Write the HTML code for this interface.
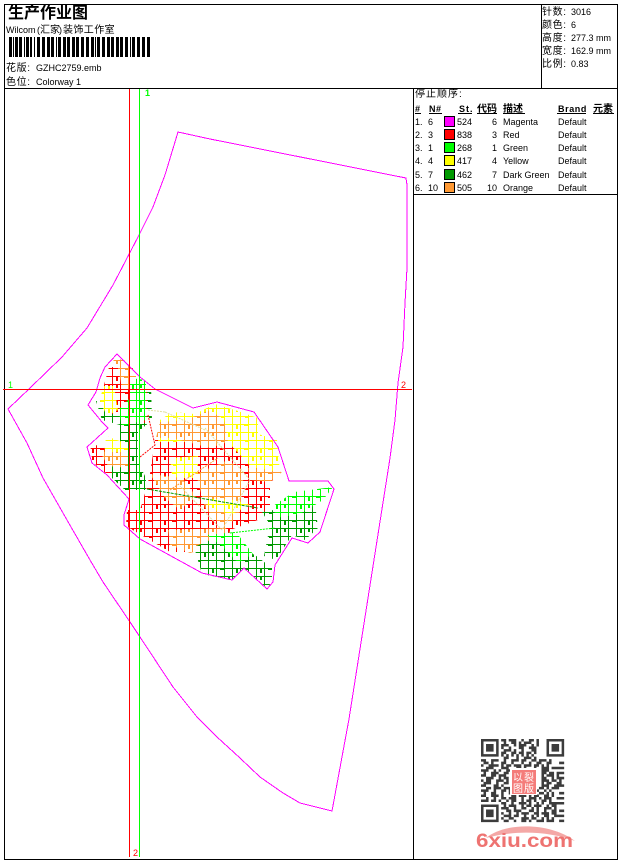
<!DOCTYPE html>
<html><head><meta charset="utf-8"><title>生产作业图</title>
<style>
html,body{margin:0;padding:0;background:#fff;width:620px;height:860px;overflow:hidden}
svg{display:block}
text{font-family:"Liberation Sans","Noto Sans CJK SC",sans-serif;font-size:9px;fill:#000}
.c{font-size:10px;letter-spacing:.6px}
.l{shape-rendering:crispEdges}
</style></head><body>
<svg width="620" height="860" viewBox="0 0 620 860" xmlns="http://www.w3.org/2000/svg">
<defs>
<pattern id="pr" width="24" height="24" patternUnits="userSpaceOnUse"><path class="l" d="M0 .5H24M0 8.5H24M0 16.5H24M.5 0V24M8.5 0V24M16.5 0V24" stroke="#f00" fill="none"/><path class="l" d="M5 9H8M21 17V21M13 1V5M4 17H8M21 1V4" stroke="#f00" stroke-width="2" fill="none"/></pattern>
<pattern id="po" width="24" height="24" patternUnits="userSpaceOnUse"><path class="l" d="M0 .5H24M0 8.5H24M0 16.5H24M.5 0V24M8.5 0V24M16.5 0V24" stroke="#f93" fill="none"/><path class="l" d="M5 9H8M21 17V21M13 1V5M4 17H8M21 1V4" stroke="#f93" stroke-width="2" fill="none"/></pattern>
<pattern id="py" width="24" height="24" patternUnits="userSpaceOnUse"><path class="l" d="M0 .5H24M0 8.5H24M0 16.5H24M.5 0V24M8.5 0V24M16.5 0V24" stroke="#ff0" fill="none"/><path class="l" d="M5 9H8M21 17V21M13 1V5M4 17H8M21 1V4" stroke="#ff0" stroke-width="2" fill="none"/></pattern>
<pattern id="pg" width="24" height="24" patternUnits="userSpaceOnUse"><path class="l" d="M0 .5H24M0 8.5H24M0 16.5H24M.5 0V24M8.5 0V24M16.5 0V24" stroke="#0f0" fill="none"/><path class="l" d="M5 9H8M21 17V21M13 1V5M4 17H8M21 1V4" stroke="#0f0" stroke-width="2" fill="none"/></pattern>
<pattern id="pd" width="24" height="24" patternUnits="userSpaceOnUse"><path class="l" d="M0 .5H24M0 8.5H24M0 16.5H24M.5 0V24M8.5 0V24M16.5 0V24" stroke="#090" fill="none"/><path class="l" d="M5 9H8M21 17V21M13 1V5M4 17H8M21 1V4" stroke="#090" stroke-width="2" fill="none"/></pattern>
</defs>

<!-- frame -->
<path class="l" d="M4.5 4.5H617.5V859.5H4.5ZM4.5 88.5H617.5M541.5 4.5V88.5M413.5 88.5V859.5M413.5 194.5H617.5" fill="none" stroke="#000"/>

<!-- header left -->
<text x="8" y="18" style="font-size:16px;font-weight:bold">生产作业图</text>
<text x="6" y="33">Wilcom</text><text x="37" y="33">(</text><text x="40" y="33" style="font-size:10px">汇</text><text x="50" y="33" style="font-size:10px">家</text><text x="59" y="33">)</text><text x="63" y="33" style="font-size:10px;letter-spacing:.4px">装饰工作室</text>
<line x1="9" y1="47" x2="150" y2="47" stroke="#000" stroke-width="20" class="l" stroke-dasharray="3 1 1 1 3 1 3 2 1 1 3 1 2 2 1 2 3 2 3 2 3 1 3 2 1 1 3 2 3 1 3 2 3 1 3 2 3 2 3 2 3 1 1 1 3 2 3 2 3 1 3 2 3 1 3 2 3 2 1 1 3 2 3 2 3 2 3 1 3 1 3 2 1 2 3 1 1 1 3 2 3 1 1 1 1 2 1"/>
<text x="6" y="71" class="c">花版:</text><text x="36" y="71">GZHC2759.emb</text>
<text x="6" y="85" class="c">色位:</text><text x="36" y="85">Colorway 1</text>

<!-- header right -->
<text x="542" y="15" class="c">针数:</text><text x="571" y="15">3016</text>
<text x="542" y="28" class="c">颜色:</text><text x="571" y="28">6</text>
<text x="542" y="41" class="c">高度:</text><text x="571" y="41">277.3 mm</text>
<text x="542" y="54" class="c">宽度:</text><text x="571" y="54">162.9 mm</text>
<text x="542" y="67" class="c">比例:</text><text x="571" y="67">0.83</text>

<!-- legend -->
<text x="415" y="97" class="c" style="letter-spacing:1px">停止顺序:</text>
<text x="415" y="112" style="font-weight:bold">#</text>
<text x="429" y="112" style="font-weight:bold;letter-spacing:.5px">N#</text>
<text x="459" y="112" style="font-weight:bold;letter-spacing:1px">St.</text>
<text x="477" y="112" style="font-size:10px;font-weight:bold">代码</text>
<text x="503" y="112" style="font-size:10px;font-weight:bold">描述</text>
<text x="558" y="112" style="font-weight:bold;letter-spacing:.6px">Brand</text>
<text x="593" y="112" style="font-size:10px;font-weight:bold">元素</text>
<path class="l" d="M415 113.5h6M429 113.5h13M458 113.5h14M477 113.5h20M503 113.5h22M557 113.5h29M593 113.5h21" stroke="#000" fill="none"/>

<text x="415" y="125">1.</text><text x="428" y="125">6</text><rect class="l" x="444.5" y="116.5" width="10" height="10" fill="#f0f" stroke="#000"/><text x="457" y="125">524</text><text x="497" y="125" text-anchor="end">6</text><text x="503" y="125">Magenta</text><text x="558" y="125">Default</text>
<text x="415" y="138">2.</text><text x="428" y="138">3</text><rect class="l" x="444.5" y="129.5" width="10" height="10" fill="#f00" stroke="#000"/><text x="457" y="138">838</text><text x="497" y="138" text-anchor="end">3</text><text x="503" y="138">Red</text><text x="558" y="138">Default</text>
<text x="415" y="151">3.</text><text x="428" y="151">1</text><rect class="l" x="444.5" y="142.5" width="10" height="10" fill="#0f0" stroke="#000"/><text x="457" y="151">268</text><text x="497" y="151" text-anchor="end">1</text><text x="503" y="151">Green</text><text x="558" y="151">Default</text>
<text x="415" y="164">4.</text><text x="428" y="164">4</text><rect class="l" x="444.5" y="155.5" width="10" height="10" fill="#ff0" stroke="#000"/><text x="457" y="164">417</text><text x="497" y="164" text-anchor="end">4</text><text x="503" y="164">Yellow</text><text x="558" y="164">Default</text>
<text x="415" y="178">5.</text><text x="428" y="178">7</text><rect class="l" x="444.5" y="169.5" width="10" height="10" fill="#090" stroke="#000"/><text x="457" y="178">462</text><text x="497" y="178" text-anchor="end">7</text><text x="503" y="178">Dark Green</text><text x="558" y="178">Default</text>
<text x="415" y="191">6.</text><text x="428" y="191">10</text><rect class="l" x="444.5" y="182.5" width="10" height="10" fill="#f93" stroke="#000"/><text x="457" y="191">505</text><text x="497" y="191" text-anchor="end">10</text><text x="503" y="191">Orange</text><text x="558" y="191">Default</text>

<!-- outer magenta outline -->
<path class="l" d="M178 132L210 139L406 178L407 185V268L405 303L403 347L398 383L395 420L390 458L349 719L332 811L300 803L283 793L260 777L240 758L217 737L197 717L173 687L140 637L130 622L103 582L90 560L67 520L43 478L27 443L8 409L30 388L62 357L87 328L113 285L138 237L153 207L165 175Z" fill="none" stroke="#f0f"/>

<!-- stitch regions : left lobe -->
<polygon fill="url(#pd)" points="96,401 122,401 126,385 151,385 152,420 138,432 138,462 146,478 146,490 125,490 112,478 104,462 120,462 120,425 102,420"/>
<polygon fill="url(#pr)" points="109,367 133,367 133,385 147,392 147,424 125,414 112,414 100,400 104,385"/>
<polygon fill="url(#po)" points="112,358 124,360 136,372 136,390 122,388 118,368"/>
<polygon fill="url(#py)" points="103,386 114,386 118,410 107,416 100,402"/>
<polygon fill="url(#pg)" points="130,378 146,380 146,420 122,426 118,410 130,398"/>
<polygon fill="url(#pr)" points="90,443 110,450 112,476 100,470 92,460"/>
<polygon fill="url(#py)" points="106,436 128,444 128,458 104,458"/>
<polygon fill="url(#po)" points="100,452 128,452 128,468 108,466"/>

<!-- main body -->
<polygon fill="url(#pr)" points="155,440 210,428 260,440 280,476 270,482 270,505 258,520 230,530 226,552 170,552 126,526 127,510 140,510 146,490 150,474"/>
<polygon fill="url(#py)" points="160,420 172,412 195,414 215,404 235,410 258,418 258,434 277,440 280,472 252,468 228,442 158,442"/>
<polygon fill="url(#po)" points="156,438 160,422 186,420 210,410 224,420 228,442 210,448 172,438"/>
<polygon fill="url(#py)" points="170,458 198,456 198,478 172,478"/>
<polygon fill="url(#po)" points="150,474 182,478 196,496 180,510 165,498"/>
<polygon fill="url(#po)" points="196,474 228,460 244,472 240,512 225,530 205,508"/>
<polygon fill="url(#po)" points="248,468 282,472 270,482 250,480"/>
<polygon fill="url(#py)" points="200,498 235,500 250,505 232,514 214,510"/>
<polygon fill="url(#po)" points="168,530 225,528 228,540 210,548 190,553 170,545"/>

<!-- bottom + right -->
<polygon fill="url(#pd)" points="194,547 215,538 255,555 272,568 272,582 267,588 244,568 232,580 202,574"/>
<polygon fill="url(#pg)" points="207,535 236,532 253,554 238,563 222,546"/>
<polygon fill="url(#pd)" points="262,512 315,503 318,528 305,540 292,535 276,560 264,556 270,525"/>
<polygon fill="url(#pg)" points="273,506 294,492 333,487 323,500 300,514 276,518"/>

<!-- thin running stitches -->
<path d="M148 410L165 412M165 412L205 430M205 428L250 480L222 530M222 530L180 486" fill="none" stroke="#e0e0a0" stroke-dasharray="2 1"/>
<path d="M148 415L155 445L140 457" fill="none" stroke="#f00" stroke-dasharray="2 1"/>
<path d="M147 489L258 508" fill="none" stroke="#090" stroke-dasharray="3 1"/>
<path d="M230 533L275 528" fill="none" stroke="#0f0" stroke-dasharray="2 1"/>
<path d="M170 490L218 458" fill="none" stroke="#f93" stroke-dasharray="2 1"/>

<!-- inner magenta outline -->
<path class="l" d="M117 354L105 367L100 378L96 392L88 405L102 422L108 428L87 447L92 463L107 475L129 499L124 515L124 525L140 539L202 573L232 580L244 568L267 589L273 582L275 565L292 538L308 543L320 532L334 489L328 481H289L278 447L254 412L217 402L193 408L155 389L140 377Z" fill="none" stroke="#f0f"/>

<!-- cross-hairs -->
<path class="l" d="M129.5 89V857M3 389.5H412" stroke="#f00" fill="none"/>
<path class="l" d="M139.5 89V857" stroke="#0f0" fill="none"/>
<text x="145" y="96" style="fill:#0f0;font-weight:bold;font-size:9px">1</text>
<text x="8" y="388" style="fill:#0f0;font-size:9px">1</text>
<text x="401" y="388" style="fill:#f00;font-size:9px">2</text>
<text x="133" y="856" style="fill:#f00;font-size:9px">2</text>

<!-- QR -->
<g transform="translate(481 739) scale(2.52)" fill="none" stroke="#3c3c3c">
<path d="M.5 .5h6v6h-6ZM26.5 .5h6v6h-6ZM.5 26.5h6v6h-6Z"/>
<path fill="#3c3c3c" stroke="none" d="M2 2h3v3H2ZM28 2h3v3h-3ZM2 28h3v3H2Z"/>
<path d="M8 .5h2m1 0h3m2 0h1m2 0h2m1 0h1
M9 1.5h1m2 0h2m1 0h1m1 0h3m2 0h1
M8 2.5h3m2 0h1m1 0h3m2 0h1m1 0h1
M8 3.5h1m2 0h1m3 0h2m2 0h3
M9 4.5h3m1 0h1m2 0h1m3 0h2
M8 5.5h2m2 0h2m1 0h2m1 0h2m1 0h1
M8 6.5h1m1 0h1m1 0h1m1 0h1m1 0h1m1 0h1m1 0h1
M9 7.5h2m3 0h1m2 0h3m1 0h1
M0 8.5h2m2 0h3m2 0h1m2 0h3m1 0h2m2 0h2m1 0h3m1 0h1
M1 9.5h2m1 0h1m3 0h2m2 0h1m3 0h1m2 0h1m2 0h2m2 0h2
M0 10.5h1m2 0h4m1 0h1m1 0h2m1 0h3m1 0h3m1 0h2m1 0h1m1 0h1
M2 11.5h3m3 0h3m3 0h2m1 0h1m3 0h1m2 0h3m1 0h2
M0 12.5h3m2 0h1m1 0h1m2 0h2m1 0h3m2 0h2m1 0h1m2 0h3
M1 13.5h1m2 0h3m2 0h2m1 0h1m11 0h2m1 0h2m1 0h1
M0 14.5h2m2 0h2m1 0h3m14 0h1m1 0h3m1 0h1
M2 15.5h3m2 0h1m1 0h2m13 0h2m2 0h1m1 0h2
M0 16.5h1m1 0h2m2 0h3m1 0h1m13 0h3m1 0h2m1 0h1
M1 17.5h3m2 0h1m2 0h2m13 0h1m1 0h2m2 0h2
M0 18.5h2m3 0h2m1 0h1m15 0h3m2 0h1m1 0h1
M2 19.5h2m1 0h3m1 0h3m11 0h2m1 0h1m1 0h3
M0 20.5h3m2 0h1m2 0h2m1 0h3m1 0h2m1 0h1m1 0h3m2 0h1m1 0h1
M1 21.5h1m2 0h2m2 0h1m2 0h3m2 0h1m2 0h2m2 0h2m1 0h1m1 0h1
M0 22.5h2m2 0h3m1 0h1m3 0h2m1 0h3m1 0h1m1 0h2m2 0h2m1 0h1
M2 23.5h1m2 0h1m2 0h2m1 0h3m2 0h1m2 0h3m1 0h1m1 0h3
M0 24.5h3m1 0h2m1 0h1m2 0h1m1 0h2m2 0h1m1 0h2m1 0h1m2 0h2m1 0h1
M8 25.5h2m2 0h1m2 0h3m1 0h1m2 0h1m1 0h1m2 0h3
M9 26.5h1m1 0h3m2 0h1m1 0h2m1 0h3m2 0h1m1 0h2
M8 27.5h3m2 0h1m2 0h2m2 0h1m1 0h1m2 0h3m1 0h1
M10 28.5h2m1 0h3m3 0h2m1 0h1m2 0h1m2 0h2
M8 29.5h1m2 0h1m2 0h1m1 0h3m2 0h2m1 0h3m1 0h2
M9 30.5h3m1 0h2m2 0h1m2 0h1m1 0h1m2 0h2m2 0h2
M8 31.5h1m2 0h2m3 0h3m1 0h2m2 0h1m1 0h1m1 0h1
M9 32.5h2m2 0h1m2 0h2m1 0h1m2 0h3m1 0h3
M31 9.5h2M30 11.5h3M31 13.5h2M31 15.5h2M30 18.5h3M31 21.5h2M30 23.5h3M30 25.5h3M31 28.5h2M30 30.5h3M31 32.5h2"/>
</g>
<!-- QR stamp -->
<rect x="510" y="768" width="27" height="27" fill="#fff"/>
<rect x="512" y="770" width="24" height="24" fill="#f47c7a"/>
<text x="513" y="781" style="fill:#fff;font-size:10px">以</text>
<text x="524" y="781" style="fill:#fff;font-size:10px">裂</text>
<text x="513" y="792" style="fill:#fff;font-size:10px">图</text>
<text x="524" y="792" style="fill:#fff;font-size:10px">版</text>

<!-- 6xiu.com -->
<path d="M486 838C505 822 550 822 575 841C548 831 515 830 486 838Z" fill="#f4a8a6"/>
<text x="476" y="847" textLength="97" lengthAdjust="spacingAndGlyphs" style="font-size:19px;font-weight:bold;fill:#ee7371">6xiu.com</text>
</svg>
</body></html>
